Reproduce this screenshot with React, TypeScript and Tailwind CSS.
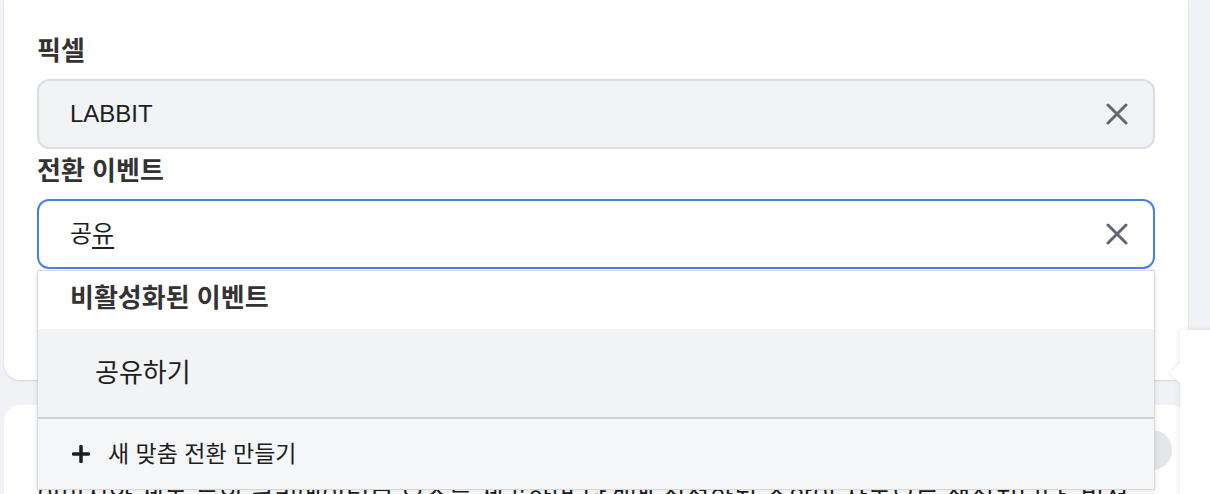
import React from 'react';

const font = "font-['Liberation_Sans','Noto_Sans_CJK_KR',sans-serif]";

const ClearIcon = () => (
  <svg width="22" height="22" viewBox="0 0 22 22" fill="none">
    <path d="M2 2L20 20M20 2L2 20" stroke="#606770" strokeWidth="3" strokeLinecap="round" />
  </svg>
);

const PlusIcon = () => (
  <svg width="18" height="18" viewBox="0 0 18 18" fill="none">
    <path d="M9 1.5V16.5M1.5 9H16.5" stroke="#1c1e21" strokeWidth="3.5" strokeLinecap="round" />
  </svg>
);

export default function App() {
  return (
    <div className={`relative w-[1210px] h-[494px] overflow-hidden bg-[#f0f2f5] ${font}`}>
      <div className="flex flex-col pl-[4px]">
        {/* form card */}
        <div className="w-[1184px] h-[380px] bg-white rounded-b-[16px] px-[33px] pt-[29px] shadow-[0_1px_2px_rgba(0,0,0,0.12)]">
          <div className="h-[50px] flex items-center pb-[6px] text-[26px] leading-[34px] font-bold text-[#333]">픽셀</div>
          <div className="h-[70px] rounded-[12px] border-2 border-[#dadde1] bg-[#f2f3f5] flex items-center justify-between pl-[31px] pr-[25px]">
            <span className="text-[24px] text-[#1c1e21]">LABBIT</span>
            <ClearIcon />
          </div>
          <div className="h-[50px] flex items-center pb-[6px] text-[26px] leading-[34px] font-bold text-[#333]">전환 이벤트</div>
          <div className="h-[70px] rounded-[12px] border-2 border-[#4b7fdf] bg-white flex items-center justify-between pl-[31px] pr-[25px]">
            <span className="text-[24px] text-[#1c1e21]">
              공<span className="underline underline-offset-[5px] decoration-2">유</span>
            </span>
            <ClearIcon />
          </div>
        </div>

        {/* next card */}
        <div className="mt-[25px] w-[1184px] h-[200px] bg-white rounded-t-[16px] px-[33px] pt-[25px]">
          <div className="flex justify-end h-[40px]">
            <div className="w-[40px] h-[40px] rounded-full bg-[#e4e6eb] mr-[-17px]" />
          </div>
          <p className="mt-[9px] text-[26px] leading-[34px] text-[#1c1e21] whitespace-nowrap">
            이미지와 제목 등의 크리에이티브 요소를 제공하면 단계에 최적화된 조합이 자동으로 생성됩니다. 비젼
          </p>
        </div>
      </div>

      {/* dropdown menu */}
      <div className="absolute left-[37px] top-[270px] w-[1118px] bg-white border border-[#d4d7dc] shadow-[0_2px_6px_rgba(0,0,0,0.1)]">
        <div className="h-[58px] flex items-center pl-[32px] pb-[4px] text-[26px] leading-[34px] font-bold text-[#333]">비활성화된 이벤트</div>
        <div className="h-[88px] flex items-center pl-[57px] bg-[#f2f3f5] text-[26px] leading-[34px] text-[#1c1e21]">공유하기</div>
        <div className="h-[72px] flex items-center gap-[18px] pl-[34px] bg-[#f5f6f7] border-t-2 border-[#ccd0d5] text-[23px] text-[#1c1e21]">
          <PlusIcon />
          <span>새 맞춤 전환 만들기</span>
        </div>
      </div>

      {/* side popover */}
      <div className="absolute left-[1173px] top-[365px] w-[16px] h-[16px] rotate-45 bg-white shadow-[0_0_4px_rgba(0,0,0,0.12)]" />
      <div className="absolute left-[1180px] top-[330px] w-[60px] h-[200px] bg-white rounded-tl-[4px] shadow-[0_0_6px_rgba(0,0,0,0.1)]" />
      <div className="absolute left-[1173px] top-[365px] w-[16px] h-[16px] rotate-45 bg-white" />
      <div className="absolute left-[1181px] top-[331px] w-[30px] h-[200px] bg-white" />
    </div>
  );
}
